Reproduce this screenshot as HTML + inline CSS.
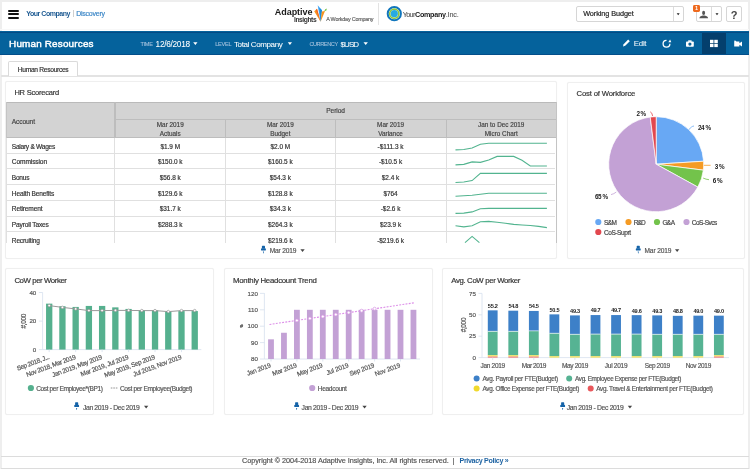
<!DOCTYPE html>
<html><head><meta charset="utf-8"><title>Human Resources</title>
<style>
html,body{margin:0;padding:0;}
body{width:750px;height:469px;position:relative;overflow:hidden;background:#fff;font-family:"Liberation Sans", sans-serif;}
svg text{font-family:"Liberation Sans", sans-serif;}
</style></head><body>
<div style="position:absolute;left:0px;top:0px;width:750px;height:1.6px;background:#eeeeee"></div>
<div style="position:absolute;left:0px;top:0px;width:1.6px;height:469px;background:#eeeeee"></div>
<div style="position:absolute;left:748.4px;top:0px;width:1.6px;height:469px;background:#eeeeee"></div>
<div style="position:absolute;left:8px;top:9.5px;width:11px;height:2px;background:#111;border-radius:1px"></div>
<div style="position:absolute;left:8px;top:13.3px;width:11px;height:2px;background:#111;border-radius:1px"></div>
<div style="position:absolute;left:8px;top:17.1px;width:11px;height:2px;background:#111;border-radius:1px"></div>
<div style="position:absolute;left:73px;top:10px;width:0.8px;height:7px;background:#cfcfcf"></div>
<div style="position:absolute;left:378px;top:3px;width:0.8px;height:22px;background:#e3e3e3"></div>
<div style="position:absolute;left:576.2px;top:6.3px;width:107.4px;height:15.7px;box-sizing:border-box;border:1px solid #d6d6d6;border-radius:2px;background:#fff"></div>
<div style="position:absolute;left:673.2px;top:7px;width:0.8px;height:14.4px;background:#dcdcdc"></div>
<div style="position:absolute;left:696.2px;top:6.2px;width:25.6px;height:15.8px;box-sizing:border-box;border:1px solid #d6d6d6;border-radius:2px;background:#fff"></div>
<div style="position:absolute;left:711.4px;top:6.8px;width:0.8px;height:14.6px;background:#dcdcdc"></div>
<div style="position:absolute;left:693.1px;top:5.0px;width:6.8px;height:6.6px;background:#ee6a1f;border-radius:1.4px"></div>
<div style="position:absolute;left:726.3px;top:6.3px;width:15.5px;height:15.7px;box-sizing:border-box;border:1px solid #d6d6d6;border-radius:2px;background:#fff"></div>
<div style="position:absolute;left:0px;top:28.9px;width:749px;height:1.6px;background:#f8f8f8"></div>
<div style="position:absolute;left:0px;top:31.1px;width:749px;height:24.3px;background:#05629c"></div>
<div style="position:absolute;left:0px;top:31.6px;width:749px;height:1.3px;background:#044a84"></div>
<div style="position:absolute;left:0px;top:54.4px;width:749px;height:1px;background:#034e8a"></div>
<div style="position:absolute;left:702.1px;top:32.5px;width:23.7px;height:21.9px;background:#043f6d"></div>
<div style="position:absolute;left:1px;top:75px;width:748px;height:1.8px;background:#e3e3e3"></div>
<div style="position:absolute;left:8.4px;top:61.1px;width:69.4px;height:15.4px;box-sizing:border-box;border:1.4px solid #dadada;border-bottom:none;border-radius:2px 2px 0 0;background:#fff"></div>
<div style="position:absolute;left:5.3px;top:81.3px;width:551.7px;height:177.3px;box-sizing:border-box;border:1px solid #efefef;border-radius:2px;background:#fff;box-shadow:0 0 1px #f2f2f2"></div>
<div style="position:absolute;left:567px;top:81.5px;width:177.70000000000005px;height:177.10000000000002px;box-sizing:border-box;border:1px solid #efefef;border-radius:2px;background:#fff;box-shadow:0 0 1px #f2f2f2"></div>
<div style="position:absolute;left:5.3px;top:268.4px;width:209.0px;height:146.8px;box-sizing:border-box;border:1px solid #efefef;border-radius:2px;background:#fff;box-shadow:0 0 1px #f2f2f2"></div>
<div style="position:absolute;left:223.6px;top:268.4px;width:209.00000000000003px;height:146.8px;box-sizing:border-box;border:1px solid #efefef;border-radius:2px;background:#fff;box-shadow:0 0 1px #f2f2f2"></div>
<div style="position:absolute;left:442.1px;top:268.4px;width:302.4px;height:146.8px;box-sizing:border-box;border:1px solid #efefef;border-radius:2px;background:#fff;box-shadow:0 0 1px #f2f2f2"></div>
<div style="position:absolute;left:6.1px;top:101.5px;width:550.4px;height:36px;background:#d3d3d3"></div>
<div style="position:absolute;left:6.1px;top:101.6px;width:550.4px;height:1.5px;background:#bababa"></div>
<div style="position:absolute;left:114.9px;top:119.1px;width:441.6px;height:0.9px;background:#bdbdbd"></div>
<div style="position:absolute;left:6.1px;top:137px;width:550.4px;height:1px;background:#bdbdbd"></div>
<div style="position:absolute;left:6.1px;top:101.5px;width:1px;height:36px;background:#c4c4c4"></div>
<div style="position:absolute;left:114.4px;top:101.5px;width:1.2px;height:36px;background:#bdbdbd"></div>
<div style="position:absolute;left:225.1px;top:119.5px;width:1px;height:18px;background:#bdbdbd"></div>
<div style="position:absolute;left:334.6px;top:119.5px;width:1px;height:18px;background:#bdbdbd"></div>
<div style="position:absolute;left:445.5px;top:119.5px;width:1px;height:18px;background:#bdbdbd"></div>
<div style="position:absolute;left:555.5px;top:101.5px;width:1.2px;height:141.2px;background:#c4c4c4"></div>
<div style="position:absolute;left:6.1px;top:152.7px;width:549.4px;height:0.9px;background:#e0e0e0"></div>
<div style="position:absolute;left:6.1px;top:168.39999999999998px;width:549.4px;height:0.9px;background:#e0e0e0"></div>
<div style="position:absolute;left:6.1px;top:184.1px;width:549.4px;height:0.9px;background:#e0e0e0"></div>
<div style="position:absolute;left:6.1px;top:199.79999999999998px;width:549.4px;height:0.9px;background:#e0e0e0"></div>
<div style="position:absolute;left:6.1px;top:215.5px;width:549.4px;height:0.9px;background:#e0e0e0"></div>
<div style="position:absolute;left:6.1px;top:231.2px;width:549.4px;height:0.9px;background:#e0e0e0"></div>
<div style="position:absolute;left:5.6px;top:137.5px;width:0.9px;height:105.2px;background:#e0e0e0"></div>
<div style="position:absolute;left:114.4px;top:137.5px;width:0.9px;height:105.2px;background:#e0e0e0"></div>
<div style="position:absolute;left:225.1px;top:137.5px;width:0.9px;height:105.2px;background:#e0e0e0"></div>
<div style="position:absolute;left:334.6px;top:137.5px;width:0.9px;height:105.2px;background:#e0e0e0"></div>
<div style="position:absolute;left:445.5px;top:137.5px;width:0.9px;height:105.2px;background:#e0e0e0"></div>
<div style="position:absolute;left:6.1px;top:242.7px;width:549px;height:14px;background:#fff"></div>
<div style="position:absolute;left:1px;top:456px;width:748px;height:0.8px;background:#dcdcdc"></div>
<div style="position:absolute;left:1px;top:468px;width:748px;height:1px;background:#dcdcdc"></div>
<svg width="750" height="469" viewBox="0 0 750 469" style="position:absolute;left:0;top:0;will-change:transform">
<path d="M314.2 11.3 L317 8.8 L320.6 21.8 Z" fill="#f7931e"/>
<path d="M316 10 L317 8.8 L320.6 21.8 Z" fill="#f05a28"/>
<path d="M317.7 5.3 L322 10.3 L320.5 21.8 Z" fill="#42a5f5"/>
<path d="M319.5 8 L322 10.3 L320.5 21.8 Z" fill="#1b8fd9"/>
<path d="M321.8 11.6 L325 11 L320.6 21.8 Z" fill="#f7931e"/>
<path d="M324.2 11.3 L325.3 9.2 L326.8 8.4 L326.4 10.6 Z" fill="#6cbf3f"/>
<circle cx="394.3" cy="13.7" r="6.6" fill="none" stroke="#0f75bc" stroke-width="2"/>
<circle cx="394.3" cy="13.7" r="4.6" fill="none" stroke="#8dc63f" stroke-width="1.6"/>
<circle cx="394.3" cy="13.7" r="3.6" fill="#27aae1"/>
<path d="M676.7 13.3 L679.7 13.3 L678.2 15.3 Z" fill="#222"/>
<ellipse cx="703.6" cy="12.9" rx="1.5" ry="2.1" fill="#555"/>
<path d="M699.2 18.3 Q699.5 16 702.6 15.4 L704.6 15.4 Q707.9 16 708.1 18.3 Z" fill="#555"/>
<path d="M715.5 13.3 L718.5 13.3 L717 15.3 Z" fill="#222"/>
<path d="M193.2 42.3 L197.5 42.3 L195.35 45 Z" fill="#fff"/>
<path d="M287.8 42.3 L292 42.3 L289.9 45 Z" fill="#fff"/>
<path d="M363.5 42.3 L367.9 42.3 L365.7 45 Z" fill="#fff"/>
<path d="M623 46.5 L623.6 44.2 L628.2 39.6 L629.8 41.2 L625.2 45.8 Z" fill="#fff"/>
<path d="M666.5 40.4 A3.4 3.4 0 1 0 669.9 43.8" fill="none" stroke="#fff" stroke-width="1.3"/>
<path d="M668.3 42.3 L671.3 42.3 L670.1 39.6 Z" fill="#fff"/>
<rect x="686" y="41.5" width="7.8" height="5.3" rx="0.8" fill="#fff"/><rect x="688.2" y="40.3" width="3.4" height="1.6" fill="#fff"/><circle cx="689.9" cy="44.1" r="1.6" fill="#06619b"/>
<rect x="710" y="39.8" width="3.5" height="3.3" fill="#fff"/><rect x="714.3" y="39.8" width="3.5" height="3.3" fill="#fff"/><rect x="710" y="43.8" width="3.5" height="3.3" fill="#fff"/><rect x="714.3" y="43.8" width="3.5" height="3.3" fill="#fff"/>
<path d="M734.2 41.6 L734.8 40.3 L736.5 41.6 L739.4 41.6 L739.4 46.5 L734.2 46.5 Z M739.4 43.2 L742 41.5 L742 46.5 L739.4 44.8 Z" fill="#fff"/>
<polyline points="455.5,149.9 463.8,149.5 472.1,148.0 480.4,144.3 488.7,143.3 497.1,143.2 505.4,143.2 513.7,143.3 522.0,143.2 530.3,143.2 538.6,143.2 546.9,143.3" fill="none" stroke="#52b48f" stroke-width="1.1"/>
<polyline points="455.5,164.9 463.8,164.4 472.1,161.9 480.4,162.4 488.7,160.0 497.1,156.4 505.4,156.4 513.7,156.4 522.0,160.2 530.3,166.0 538.6,166.0 546.9,166.0" fill="none" stroke="#52b48f" stroke-width="1.1"/>
<polyline points="455.5,182.5 463.8,182.0 472.1,180.6 480.4,173.4 488.7,173.4 497.1,173.4 505.4,173.4 513.7,173.4 522.0,173.4 530.3,173.4 538.6,173.4 546.9,173.4" fill="none" stroke="#52b48f" stroke-width="1.1"/>
<polyline points="455.5,196.3 463.8,195.7 472.1,195.2 480.4,194.2 488.7,193.3 497.1,193.3 505.4,193.3 513.7,193.3 522.0,193.3 530.3,193.3 538.6,193.3 546.9,193.3" fill="none" stroke="#52b48f" stroke-width="1.1"/>
<polyline points="455.5,213.4 463.8,213.1 472.1,211.9 480.4,208.8 488.7,208.4 497.1,208.4 505.4,208.4 513.7,208.4 522.0,208.4 530.3,208.4 538.6,208.4 546.9,208.4" fill="none" stroke="#52b48f" stroke-width="1.1"/>
<polyline points="455.5,225.7 463.8,226.9 472.1,225.7 480.4,221.7 488.7,221.4 497.1,222.2 505.4,223.2 513.7,224.4 522.0,225.0 530.3,225.5 538.6,226.4 546.9,227.6" fill="none" stroke="#52b48f" stroke-width="1.1"/>
<polyline points="465,242.7 472.1,236.4 479.4,242.7" fill="none" stroke="#52b48f" stroke-width="1.1"/>
<rect x="261.90" y="245.80" width="3.1" height="2.8" rx="0.6" fill="#1463a8"/><rect x="261.00" y="248.30" width="4.9" height="2.3" rx="0.9" fill="#1463a8"/><path d="M262.90 251.50 L264.00 251.50 L263.60 253.60 L263.30 253.60 Z" fill="#1463a8"/>
<path d="M300.4 249.2 L304.7 249.2 L302.54999999999995 252.0 Z" fill="#444"/>
<path d="M656.2 164.2 L656.20 116.70 A47.5 47.5 0 0 1 703.61 161.22 Z" fill="#68a8f4" stroke="#fff" stroke-width="0.7"/>
<path d="M656.2 164.2 L703.61 161.22 A47.5 47.5 0 0 1 703.33 170.15 Z" fill="#f59b24" stroke="#fff" stroke-width="0.7"/>
<path d="M656.2 164.2 L703.33 170.15 A47.5 47.5 0 0 1 697.82 187.08 Z" fill="#73c34b" stroke="#fff" stroke-width="0.7"/>
<path d="M656.2 164.2 L697.82 187.08 A47.5 47.5 0 1 1 650.25 117.07 Z" fill="#c3a1d5" stroke="#fff" stroke-width="0.7"/>
<path d="M656.2 164.2 L650.25 117.07 A47.5 47.5 0 0 1 656.20 116.70 Z" fill="#e2474e" stroke="#fff" stroke-width="0.7"/>
<path d="M650.2 111.8 Q652.2 112.5 652.6 116" fill="none" stroke="#e2474e" stroke-width="0.8"/>
<path d="M688.6 129.8 L691.5 127 Q692.5 126.2 694 126" fill="none" stroke="#68a8f4" stroke-width="0.8"/>
<path d="M704 165.3 L710.6 165.3" fill="none" stroke="#f59b24" stroke-width="0.8"/>
<path d="M703.2 178.1 Q706 179.4 709 179.7" fill="none" stroke="#73c34b" stroke-width="0.8"/>
<path d="M611 194.6 Q614 194 616.3 192" fill="none" stroke="#c3a1d5" stroke-width="0.8"/>
<circle cx="598.3" cy="222" r="3.1" fill="#68a8f4"/>
<circle cx="628.5" cy="222" r="3.1" fill="#f59b24"/>
<circle cx="657" cy="222" r="3.1" fill="#73c34b"/>
<circle cx="686.5" cy="222" r="3.1" fill="#c3a1d5"/>
<circle cx="598.3" cy="232" r="3.1" fill="#e2474e"/>
<rect x="636.70" y="245.80" width="3.1" height="2.8" rx="0.6" fill="#1463a8"/><rect x="635.80" y="248.30" width="4.9" height="2.3" rx="0.9" fill="#1463a8"/><path d="M637.70 251.50 L638.80 251.50 L638.40 253.60 L638.10 253.60 Z" fill="#1463a8"/>
<path d="M675 249.2 L679.3 249.2 L677.15 252.0 Z" fill="#444"/>
<line x1="42.6" y1="292.5" x2="42.6" y2="349.6" stroke="#d5e0ee" stroke-width="0.8"/>
<line x1="42.6" y1="349.6" x2="201.3" y2="349.6" stroke="#d5e0ee" stroke-width="0.8"/>
<line x1="38.9" y1="349.6" x2="42.6" y2="349.6" stroke="#d5e0ee" stroke-width="0.8"/>
<line x1="38.9" y1="321.1" x2="42.6" y2="321.1" stroke="#d5e0ee" stroke-width="0.8"/>
<line x1="38.9" y1="292.5" x2="42.6" y2="292.5" stroke="#d5e0ee" stroke-width="0.8"/>
<rect x="46.05" y="303.65" width="6.3" height="45.95" fill="#55b08e"/>
<rect x="59.28" y="306.22" width="6.3" height="43.38" fill="#55b08e"/>
<rect x="72.51" y="306.93" width="6.3" height="42.67" fill="#55b08e"/>
<rect x="85.74" y="305.93" width="6.3" height="43.67" fill="#55b08e"/>
<rect x="98.97" y="305.93" width="6.3" height="43.67" fill="#55b08e"/>
<rect x="112.20" y="307.36" width="6.3" height="42.24" fill="#55b08e"/>
<rect x="125.43" y="308.93" width="6.3" height="40.67" fill="#55b08e"/>
<rect x="138.66" y="310.36" width="6.3" height="39.24" fill="#55b08e"/>
<rect x="151.89" y="310.36" width="6.3" height="39.24" fill="#55b08e"/>
<rect x="165.12" y="311.64" width="6.3" height="37.96" fill="#55b08e"/>
<rect x="178.35" y="311.07" width="6.3" height="38.53" fill="#55b08e"/>
<rect x="191.58" y="311.07" width="6.3" height="38.53" fill="#55b08e"/>
<polyline points="49.2,305.6 62.4,307.4 75.7,308.9 88.9,310.6 102.1,310.6 115.4,310.4 128.6,310.4 141.8,310.6 155.0,310.6 168.3,311.6 181.5,310.6 194.7,310.6" fill="none" stroke="#999" stroke-width="1"/>
<circle cx="49.2" cy="305.6" r="1.3" fill="#fff" stroke="#888" stroke-width="0.6"/>
<circle cx="62.4" cy="307.4" r="1.3" fill="#fff" stroke="#888" stroke-width="0.6"/>
<circle cx="75.7" cy="308.9" r="1.3" fill="#fff" stroke="#888" stroke-width="0.6"/>
<circle cx="88.9" cy="310.6" r="1.3" fill="#fff" stroke="#888" stroke-width="0.6"/>
<circle cx="102.1" cy="310.6" r="1.3" fill="#fff" stroke="#888" stroke-width="0.6"/>
<circle cx="115.4" cy="310.4" r="1.3" fill="#fff" stroke="#888" stroke-width="0.6"/>
<circle cx="128.6" cy="310.4" r="1.3" fill="#fff" stroke="#888" stroke-width="0.6"/>
<circle cx="141.8" cy="310.6" r="1.3" fill="#fff" stroke="#888" stroke-width="0.6"/>
<circle cx="155.0" cy="310.6" r="1.3" fill="#fff" stroke="#888" stroke-width="0.6"/>
<circle cx="168.3" cy="311.6" r="1.3" fill="#fff" stroke="#888" stroke-width="0.6"/>
<circle cx="181.5" cy="310.6" r="1.3" fill="#fff" stroke="#888" stroke-width="0.6"/>
<circle cx="194.7" cy="310.6" r="1.3" fill="#fff" stroke="#888" stroke-width="0.6"/>
<line x1="49.2" y1="349.6" x2="49.2" y2="352.1" stroke="#d5e0ee" stroke-width="0.8"/>
<line x1="75.7" y1="349.6" x2="75.7" y2="352.1" stroke="#d5e0ee" stroke-width="0.8"/>
<line x1="102.1" y1="349.6" x2="102.1" y2="352.1" stroke="#d5e0ee" stroke-width="0.8"/>
<line x1="128.6" y1="349.6" x2="128.6" y2="352.1" stroke="#d5e0ee" stroke-width="0.8"/>
<line x1="155.0" y1="349.6" x2="155.0" y2="352.1" stroke="#d5e0ee" stroke-width="0.8"/>
<line x1="181.5" y1="349.6" x2="181.5" y2="352.1" stroke="#d5e0ee" stroke-width="0.8"/>
<circle cx="30.9" cy="388" r="3.1" fill="#55b08e"/>
<line x1="110.8" y1="388" x2="117.4" y2="388" stroke="#888" stroke-width="0.9" stroke-dasharray="1.6 0.9"/>
<rect x="75.10" y="402.30" width="3.1" height="2.8" rx="0.6" fill="#1463a8"/><rect x="74.20" y="404.80" width="4.9" height="2.3" rx="0.9" fill="#1463a8"/><path d="M76.10 408.00 L77.20 408.00 L76.80 410.10 L76.50 410.10 Z" fill="#1463a8"/>
<path d="M144 405.7 L148.3 405.7 L146.15 408.5 Z" fill="#444"/>
<line x1="264.4" y1="293.2" x2="264.4" y2="359" stroke="#d5e0ee" stroke-width="0.8"/>
<line x1="264.4" y1="359" x2="420" y2="359" stroke="#d5e0ee" stroke-width="0.8"/>
<line x1="260" y1="359.0" x2="264.4" y2="359.0" stroke="#d5e0ee" stroke-width="0.8"/>
<line x1="260" y1="342.6" x2="264.4" y2="342.6" stroke="#d5e0ee" stroke-width="0.8"/>
<line x1="260" y1="326.2" x2="264.4" y2="326.2" stroke="#d5e0ee" stroke-width="0.8"/>
<line x1="260" y1="309.8" x2="264.4" y2="309.8" stroke="#d5e0ee" stroke-width="0.8"/>
<line x1="260" y1="293.4" x2="264.4" y2="293.4" stroke="#d5e0ee" stroke-width="0.8"/>
<rect x="268.10" y="339.32" width="5.8" height="19.68" fill="#c3a1d5"/>
<rect x="281.05" y="332.76" width="5.8" height="26.24" fill="#c3a1d5"/>
<rect x="294.00" y="309.80" width="5.8" height="49.20" fill="#c3a1d5"/>
<rect x="306.95" y="309.80" width="5.8" height="49.20" fill="#c3a1d5"/>
<rect x="319.90" y="309.80" width="5.8" height="49.20" fill="#c3a1d5"/>
<rect x="332.85" y="309.80" width="5.8" height="49.20" fill="#c3a1d5"/>
<rect x="345.80" y="309.80" width="5.8" height="49.20" fill="#c3a1d5"/>
<rect x="358.75" y="309.80" width="5.8" height="49.20" fill="#c3a1d5"/>
<rect x="371.70" y="309.80" width="5.8" height="49.20" fill="#c3a1d5"/>
<rect x="384.65" y="309.80" width="5.8" height="49.20" fill="#c3a1d5"/>
<rect x="397.60" y="309.80" width="5.8" height="49.20" fill="#c3a1d5"/>
<rect x="410.55" y="309.80" width="5.8" height="49.20" fill="#c3a1d5"/>
<line x1="269.5" y1="324.5" x2="414.95" y2="302.7" stroke="#dc8ee8" stroke-width="1.1" stroke-dasharray="1.9 1.3"/>
<circle cx="296.9" cy="320.4" r="1.5" fill="#fff" stroke="#d596e2" stroke-width="0.7"/>
<circle cx="309.9" cy="318.4" r="1.5" fill="#fff" stroke="#d596e2" stroke-width="0.7"/>
<circle cx="322.8" cy="316.5" r="1.5" fill="#fff" stroke="#d596e2" stroke-width="0.7"/>
<circle cx="335.8" cy="314.5" r="1.5" fill="#fff" stroke="#d596e2" stroke-width="0.7"/>
<circle cx="348.7" cy="312.6" r="1.5" fill="#fff" stroke="#d596e2" stroke-width="0.7"/>
<circle cx="361.6" cy="310.7" r="1.5" fill="#fff" stroke="#d596e2" stroke-width="0.7"/>
<circle cx="374.6" cy="308.7" r="1.5" fill="#fff" stroke="#d596e2" stroke-width="0.7"/>
<line x1="271.0" y1="359" x2="271.0" y2="361.5" stroke="#d5e0ee" stroke-width="0.8"/>
<line x1="296.9" y1="359" x2="296.9" y2="361.5" stroke="#d5e0ee" stroke-width="0.8"/>
<line x1="322.8" y1="359" x2="322.8" y2="361.5" stroke="#d5e0ee" stroke-width="0.8"/>
<line x1="348.7" y1="359" x2="348.7" y2="361.5" stroke="#d5e0ee" stroke-width="0.8"/>
<line x1="374.6" y1="359" x2="374.6" y2="361.5" stroke="#d5e0ee" stroke-width="0.8"/>
<line x1="400.5" y1="359" x2="400.5" y2="361.5" stroke="#d5e0ee" stroke-width="0.8"/>
<circle cx="312.2" cy="388" r="3.1" fill="#c3a1d5"/>
<rect x="295.10" y="402.30" width="3.1" height="2.8" rx="0.6" fill="#1463a8"/><rect x="294.20" y="404.80" width="4.9" height="2.3" rx="0.9" fill="#1463a8"/><path d="M296.10 408.00 L297.20 408.00 L296.80 410.10 L296.50 410.10 Z" fill="#1463a8"/>
<path d="M362.4 405.7 L366.7 405.7 L364.54999999999995 408.5 Z" fill="#444"/>
<line x1="482" y1="293.4" x2="482" y2="357.6" stroke="#d5e0ee" stroke-width="0.8"/>
<line x1="482" y1="357.6" x2="729" y2="357.6" stroke="#d5e0ee" stroke-width="0.8"/>
<line x1="478.5" y1="357.6" x2="482" y2="357.6" stroke="#d5e0ee" stroke-width="0.8"/>
<line x1="478.5" y1="336.2" x2="482" y2="336.2" stroke="#d5e0ee" stroke-width="0.8"/>
<line x1="478.5" y1="314.8" x2="482" y2="314.8" stroke="#d5e0ee" stroke-width="0.8"/>
<line x1="478.5" y1="293.4" x2="482" y2="293.4" stroke="#d5e0ee" stroke-width="0.8"/>
<rect x="487.80" y="310.35" width="9.8" height="21.06" fill="#3d80c8"/>
<rect x="487.80" y="331.41" width="9.8" height="23.79" fill="#56b393"/>
<rect x="487.80" y="330.91" width="9.8" height="0.6" fill="#fff"/>
<rect x="487.80" y="355.20" width="9.8" height="1.4" fill="#f0e05c"/>
<rect x="487.80" y="356.60" width="9.8" height="1.0" fill="#ee6f6f"/>
<rect x="508.36" y="310.69" width="9.8" height="20.72" fill="#3d80c8"/>
<rect x="508.36" y="331.41" width="9.8" height="23.79" fill="#56b393"/>
<rect x="508.36" y="330.91" width="9.8" height="0.6" fill="#fff"/>
<rect x="508.36" y="355.20" width="9.8" height="1.4" fill="#f0e05c"/>
<rect x="508.36" y="356.60" width="9.8" height="1.0" fill="#ee6f6f"/>
<rect x="528.92" y="310.95" width="9.8" height="20.12" fill="#3d80c8"/>
<rect x="528.92" y="331.06" width="9.8" height="24.14" fill="#56b393"/>
<rect x="528.92" y="330.56" width="9.8" height="0.6" fill="#fff"/>
<rect x="528.92" y="355.20" width="9.8" height="1.4" fill="#f0e05c"/>
<rect x="528.92" y="356.60" width="9.8" height="1.0" fill="#ee6f6f"/>
<rect x="549.48" y="314.37" width="9.8" height="19.00" fill="#3d80c8"/>
<rect x="549.48" y="333.38" width="9.8" height="22.82" fill="#56b393"/>
<rect x="549.48" y="332.88" width="9.8" height="0.6" fill="#fff"/>
<rect x="549.48" y="356.20" width="9.8" height="1.4" fill="#f0e05c"/>
<rect x="570.04" y="315.40" width="9.8" height="19.00" fill="#3d80c8"/>
<rect x="570.04" y="334.40" width="9.8" height="21.80" fill="#56b393"/>
<rect x="570.04" y="333.90" width="9.8" height="0.6" fill="#fff"/>
<rect x="570.04" y="356.20" width="9.8" height="1.4" fill="#f0e05c"/>
<rect x="590.60" y="315.06" width="9.8" height="19.17" fill="#3d80c8"/>
<rect x="590.60" y="334.23" width="9.8" height="21.97" fill="#56b393"/>
<rect x="590.60" y="333.73" width="9.8" height="0.6" fill="#fff"/>
<rect x="590.60" y="356.20" width="9.8" height="1.4" fill="#f0e05c"/>
<rect x="611.16" y="315.06" width="9.8" height="19.17" fill="#3d80c8"/>
<rect x="611.16" y="334.23" width="9.8" height="21.97" fill="#56b393"/>
<rect x="611.16" y="333.73" width="9.8" height="0.6" fill="#fff"/>
<rect x="611.16" y="356.20" width="9.8" height="1.4" fill="#f0e05c"/>
<rect x="631.72" y="315.14" width="9.8" height="19.09" fill="#3d80c8"/>
<rect x="631.72" y="334.23" width="9.8" height="21.97" fill="#56b393"/>
<rect x="631.72" y="333.73" width="9.8" height="0.6" fill="#fff"/>
<rect x="631.72" y="356.20" width="9.8" height="1.4" fill="#f0e05c"/>
<rect x="652.28" y="315.40" width="9.8" height="19.00" fill="#3d80c8"/>
<rect x="652.28" y="334.40" width="9.8" height="21.80" fill="#56b393"/>
<rect x="652.28" y="333.90" width="9.8" height="0.6" fill="#fff"/>
<rect x="652.28" y="356.20" width="9.8" height="1.4" fill="#f0e05c"/>
<rect x="672.84" y="315.83" width="9.8" height="18.58" fill="#3d80c8"/>
<rect x="672.84" y="334.40" width="9.8" height="21.80" fill="#56b393"/>
<rect x="672.84" y="333.90" width="9.8" height="0.6" fill="#fff"/>
<rect x="672.84" y="356.20" width="9.8" height="1.4" fill="#f0e05c"/>
<rect x="693.40" y="315.66" width="9.8" height="18.75" fill="#3d80c8"/>
<rect x="693.40" y="334.40" width="9.8" height="21.80" fill="#56b393"/>
<rect x="693.40" y="333.90" width="9.8" height="0.6" fill="#fff"/>
<rect x="693.40" y="356.20" width="9.8" height="1.4" fill="#f0e05c"/>
<rect x="713.96" y="315.66" width="9.8" height="18.75" fill="#3d80c8"/>
<rect x="713.96" y="334.40" width="9.8" height="20.80" fill="#56b393"/>
<rect x="713.96" y="333.90" width="9.8" height="0.6" fill="#fff"/>
<rect x="713.96" y="355.20" width="9.8" height="1.4" fill="#f0e05c"/>
<rect x="713.96" y="356.60" width="9.8" height="1.0" fill="#ee6f6f"/>
<line x1="492.7" y1="357.6" x2="492.7" y2="360.1" stroke="#d5e0ee" stroke-width="0.8"/>
<line x1="533.8" y1="357.6" x2="533.8" y2="360.1" stroke="#d5e0ee" stroke-width="0.8"/>
<line x1="574.9" y1="357.6" x2="574.9" y2="360.1" stroke="#d5e0ee" stroke-width="0.8"/>
<line x1="616.1" y1="357.6" x2="616.1" y2="360.1" stroke="#d5e0ee" stroke-width="0.8"/>
<line x1="657.2" y1="357.6" x2="657.2" y2="360.1" stroke="#d5e0ee" stroke-width="0.8"/>
<line x1="698.3" y1="357.6" x2="698.3" y2="360.1" stroke="#d5e0ee" stroke-width="0.8"/>
<circle cx="476.6" cy="378.6" r="3.0" fill="#3d80c8"/>
<circle cx="569.2" cy="378.6" r="3.0" fill="#56b393"/>
<circle cx="476.6" cy="388.6" r="3.0" fill="#f0d92c"/>
<circle cx="590.7" cy="388.6" r="3.0" fill="#e9575b"/>
<rect x="561.10" y="402.30" width="3.1" height="2.8" rx="0.6" fill="#1463a8"/><rect x="560.20" y="404.80" width="4.9" height="2.3" rx="0.9" fill="#1463a8"/><path d="M562.10 408.00 L563.20 408.00 L562.80 410.10 L562.50 410.10 Z" fill="#1463a8"/>
<path d="M627.8 405.7 L632.0999999999999 405.7 L629.9499999999999 408.5 Z" fill="#444"/>
<text x="26.20" y="16.00" font-size="7.0" fill="#1d5a92" font-weight="bold" text-anchor="start" style="letter-spacing:-0.455px;">Your Company</text>
<text x="76.20" y="16.00" font-size="7.0" fill="#3b86c6" font-weight="normal" text-anchor="start" style="letter-spacing:-0.237px;" stroke="#3b86c6" stroke-width="0.18">Discovery</text>
<text x="274.80" y="15.20" font-size="9.0" fill="#1a1a1a" font-weight="bold" text-anchor="start" style="letter-spacing:-0.052px;">Adaptive</text>
<text x="294.00" y="21.60" font-size="6.7" fill="#333" font-weight="bold" text-anchor="start" style="letter-spacing:-0.430px;">Insights</text>
<text x="326.20" y="21.20" font-size="5.4" fill="#666" font-weight="normal" text-anchor="start" style="letter-spacing:-0.197px;" stroke="#666" stroke-width="0.18">A Workday Company</text>
<text x="402.70" y="16.70" font-size="7.2" fill="#555" font-weight="normal" text-anchor="start" style="letter-spacing:-0.633px;" stroke="#555" stroke-width="0.1">Your</text>
<text x="415.00" y="16.70" font-size="7.2" fill="#1a1a1a" font-weight="bold" text-anchor="start" style="letter-spacing:-0.293px;">Company</text>
<text x="445.70" y="16.70" font-size="7.2" fill="#555" font-weight="normal" text-anchor="start" style="letter-spacing:-0.119px;" stroke="#555" stroke-width="0.1">.Inc.</text>
<text x="583.20" y="16.00" font-size="7.3" fill="#222" font-weight="normal" text-anchor="start" style="letter-spacing:-0.085px;" stroke="#222" stroke-width="0.18">Working Budget</text>
<text x="696.50" y="10.40" font-size="5.6" fill="#fff" font-weight="bold" text-anchor="middle">1</text>
<text x="734.00" y="18.90" font-size="11" fill="#444" font-weight="bold" text-anchor="middle">?</text>
<text x="9.10" y="47.40" font-size="9.9" fill="#fff" font-weight="normal" text-anchor="start" style="letter-spacing:0.188px;" stroke="#fff" stroke-width="0.45">Human Resources</text>
<text x="140.40" y="46.20" font-size="5.6" fill="#a6c3de" font-weight="normal" text-anchor="start" style="letter-spacing:-0.294px;" stroke="#a6c3de" stroke-width="0.08">TIME</text>
<text x="155.60" y="46.70" font-size="8.3" fill="#fff" font-weight="normal" text-anchor="start" style="letter-spacing:-0.302px;" stroke="#fff" stroke-width="0.05">12/6/2018</text>
<text x="215.30" y="46.20" font-size="5.6" fill="#a6c3de" font-weight="normal" text-anchor="start" style="letter-spacing:-0.284px;" stroke="#a6c3de" stroke-width="0.08">LEVEL</text>
<text x="234.00" y="46.60" font-size="8.0" fill="#fff" font-weight="normal" text-anchor="start" style="letter-spacing:-0.389px;" stroke="#fff" stroke-width="0.05">Total Company</text>
<text x="309.40" y="46.20" font-size="5.6" fill="#a6c3de" font-weight="normal" text-anchor="start" style="letter-spacing:-0.425px;" stroke="#a6c3de" stroke-width="0.08">CURRENCY</text>
<text x="340.60" y="46.60" font-size="8.0" fill="#fff" font-weight="normal" text-anchor="start" style="letter-spacing:-0.961px;" stroke="#fff" stroke-width="0.05">$USD</text>
<text x="633.80" y="46.00" font-size="7.9" fill="#f2f6fa" font-weight="normal" text-anchor="start" style="letter-spacing:-0.277px;" stroke="#f2f6fa" stroke-width="0.05">Edit</text>
<text x="17.80" y="71.80" font-size="6.7" fill="#333" font-weight="normal" text-anchor="start" style="letter-spacing:-0.319px;" stroke="#333" stroke-width="0.18">Human Resources</text>
<text x="14.40" y="95.20" font-size="7.5" fill="#333" font-weight="normal" text-anchor="start" style="letter-spacing:-0.209px;" stroke="#333" stroke-width="0.18">HR Scorecard</text>
<text x="11.80" y="123.80" font-size="6.7" fill="#444" font-weight="normal" text-anchor="start" style="letter-spacing:-0.153px;" stroke="#444" stroke-width="0.18">Account</text>
<text x="326.30" y="113.20" font-size="6.6" fill="#444" font-weight="normal" text-anchor="start" style="letter-spacing:-0.094px;" stroke="#444" stroke-width="0.18">Period</text>
<text x="170.25" y="127.10" font-size="6.37" fill="#444" font-weight="normal" text-anchor="middle" stroke="#444" stroke-width="0.18">Mar 2019</text>
<text x="170.25" y="135.50" font-size="6.37" fill="#444" font-weight="normal" text-anchor="middle" stroke="#444" stroke-width="0.18">Actuals</text>
<text x="280.35" y="127.10" font-size="6.37" fill="#444" font-weight="normal" text-anchor="middle" stroke="#444" stroke-width="0.18">Mar 2019</text>
<text x="280.35" y="135.50" font-size="6.37" fill="#444" font-weight="normal" text-anchor="middle" stroke="#444" stroke-width="0.18">Budget</text>
<text x="390.55" y="127.10" font-size="6.37" fill="#444" font-weight="normal" text-anchor="middle" stroke="#444" stroke-width="0.18">Mar 2019</text>
<text x="390.55" y="135.50" font-size="6.37" fill="#444" font-weight="normal" text-anchor="middle" stroke="#444" stroke-width="0.18">Variance</text>
<text x="501.25" y="127.10" font-size="6.37" fill="#444" font-weight="normal" text-anchor="middle" stroke="#444" stroke-width="0.18">Jan to Dec 2019</text>
<text x="501.25" y="135.50" font-size="6.37" fill="#444" font-weight="normal" text-anchor="middle" stroke="#444" stroke-width="0.18">Micro Chart</text>
<text x="11.80" y="148.60" font-size="6.6" fill="#333" font-weight="normal" text-anchor="start" style="letter-spacing:-0.274px;" stroke="#333" stroke-width="0.18">Salary & Wages</text>
<text x="170.25" y="148.60" font-size="6.44" fill="#333" font-weight="normal" text-anchor="middle" stroke="#333" stroke-width="0.18">$1.9 M</text>
<text x="280.35" y="148.60" font-size="6.44" fill="#333" font-weight="normal" text-anchor="middle" stroke="#333" stroke-width="0.18">$2.0 M</text>
<text x="390.55" y="148.60" font-size="6.44" fill="#333" font-weight="normal" text-anchor="middle" stroke="#333" stroke-width="0.18">-$111.3 k</text>
<text x="11.80" y="164.30" font-size="6.6" fill="#333" font-weight="normal" text-anchor="start" style="letter-spacing:-0.108px;" stroke="#333" stroke-width="0.18">Commission</text>
<text x="170.25" y="164.30" font-size="6.44" fill="#333" font-weight="normal" text-anchor="middle" stroke="#333" stroke-width="0.18">$150.0 k</text>
<text x="280.35" y="164.30" font-size="6.44" fill="#333" font-weight="normal" text-anchor="middle" stroke="#333" stroke-width="0.18">$160.5 k</text>
<text x="390.55" y="164.30" font-size="6.44" fill="#333" font-weight="normal" text-anchor="middle" stroke="#333" stroke-width="0.18">-$10.5 k</text>
<text x="11.80" y="180.00" font-size="6.6" fill="#333" font-weight="normal" text-anchor="start" style="letter-spacing:-0.261px;" stroke="#333" stroke-width="0.18">Bonus</text>
<text x="170.25" y="180.00" font-size="6.44" fill="#333" font-weight="normal" text-anchor="middle" stroke="#333" stroke-width="0.18">$56.8 k</text>
<text x="280.35" y="180.00" font-size="6.44" fill="#333" font-weight="normal" text-anchor="middle" stroke="#333" stroke-width="0.18">$54.3 k</text>
<text x="390.55" y="180.00" font-size="6.44" fill="#333" font-weight="normal" text-anchor="middle" stroke="#333" stroke-width="0.18">$2.4 k</text>
<text x="11.80" y="195.70" font-size="6.6" fill="#333" font-weight="normal" text-anchor="start" style="letter-spacing:-0.161px;" stroke="#333" stroke-width="0.18">Health Benefits</text>
<text x="170.25" y="195.70" font-size="6.44" fill="#333" font-weight="normal" text-anchor="middle" stroke="#333" stroke-width="0.18">$129.6 k</text>
<text x="280.35" y="195.70" font-size="6.44" fill="#333" font-weight="normal" text-anchor="middle" stroke="#333" stroke-width="0.18">$128.8 k</text>
<text x="390.55" y="195.70" font-size="6.44" fill="#333" font-weight="normal" text-anchor="middle" stroke="#333" stroke-width="0.18">$764</text>
<text x="11.80" y="211.40" font-size="6.6" fill="#333" font-weight="normal" text-anchor="start" style="letter-spacing:-0.175px;" stroke="#333" stroke-width="0.18">Retirement</text>
<text x="170.25" y="211.40" font-size="6.44" fill="#333" font-weight="normal" text-anchor="middle" stroke="#333" stroke-width="0.18">$31.7 k</text>
<text x="280.35" y="211.40" font-size="6.44" fill="#333" font-weight="normal" text-anchor="middle" stroke="#333" stroke-width="0.18">$34.3 k</text>
<text x="390.55" y="211.40" font-size="6.44" fill="#333" font-weight="normal" text-anchor="middle" stroke="#333" stroke-width="0.18">-$2.6 k</text>
<text x="11.80" y="227.10" font-size="6.6" fill="#333" font-weight="normal" text-anchor="start" style="letter-spacing:-0.169px;" stroke="#333" stroke-width="0.18">Payroll Taxes</text>
<text x="170.25" y="227.10" font-size="6.44" fill="#333" font-weight="normal" text-anchor="middle" stroke="#333" stroke-width="0.18">$288.3 k</text>
<text x="280.35" y="227.10" font-size="6.44" fill="#333" font-weight="normal" text-anchor="middle" stroke="#333" stroke-width="0.18">$264.3 k</text>
<text x="390.55" y="227.10" font-size="6.44" fill="#333" font-weight="normal" text-anchor="middle" stroke="#333" stroke-width="0.18">$23.9 k</text>
<text x="11.80" y="242.80" font-size="6.6" fill="#333" font-weight="normal" text-anchor="start" style="letter-spacing:-0.179px;" stroke="#333" stroke-width="0.18">Recruiting</text>
<text x="280.35" y="242.80" font-size="6.44" fill="#333" font-weight="normal" text-anchor="middle" stroke="#333" stroke-width="0.18">$219.6 k</text>
<text x="390.55" y="242.80" font-size="6.44" fill="#333" font-weight="normal" text-anchor="middle" stroke="#333" stroke-width="0.18">-$219.6 k</text>
<text x="269.80" y="253.40" font-size="6.6" fill="#555" font-weight="normal" text-anchor="start" style="letter-spacing:-0.182px;" stroke="#555" stroke-width="0.18">Mar 2019</text>
<text x="576.50" y="95.50" font-size="7.7" fill="#333" font-weight="normal" text-anchor="start" style="letter-spacing:-0.158px;" stroke="#333" stroke-width="0.18">Cost of Workforce</text>
<text x="636.60" y="115.90" font-size="6.3" fill="#222" font-weight="bold" text-anchor="start" style="letter-spacing:-0.620px;">2 %</text>
<text x="698.00" y="129.90" font-size="6.3" fill="#222" font-weight="bold" text-anchor="start" style="letter-spacing:-0.390px;">24 %</text>
<text x="714.80" y="168.90" font-size="6.3" fill="#222" font-weight="bold" text-anchor="start" style="letter-spacing:-0.553px;">3 %</text>
<text x="712.70" y="182.90" font-size="6.3" fill="#222" font-weight="bold" text-anchor="start" style="letter-spacing:-0.520px;">6 %</text>
<text x="595.00" y="198.80" font-size="6.3" fill="#222" font-weight="bold" text-anchor="start" style="letter-spacing:-0.440px;">65 %</text>
<text x="603.90" y="224.50" font-size="6.5" fill="#444" font-weight="normal" text-anchor="start" style="letter-spacing:-0.565px;" stroke="#444" stroke-width="0.18">S&amp;M</text>
<text x="633.70" y="224.50" font-size="6.5" fill="#444" font-weight="normal" text-anchor="start" style="letter-spacing:-0.811px;" stroke="#444" stroke-width="0.18">R&amp;D</text>
<text x="662.40" y="224.50" font-size="6.5" fill="#444" font-weight="normal" text-anchor="start" style="letter-spacing:-0.578px;" stroke="#444" stroke-width="0.18">G&amp;A</text>
<text x="691.70" y="224.50" font-size="6.5" fill="#444" font-weight="normal" text-anchor="start" style="letter-spacing:-0.463px;" stroke="#444" stroke-width="0.18">CoS-Svcs</text>
<text x="603.90" y="234.50" font-size="6.5" fill="#444" font-weight="normal" text-anchor="start" style="letter-spacing:-0.395px;" stroke="#444" stroke-width="0.18">CoS-Suprt</text>
<text x="644.50" y="253.40" font-size="6.6" fill="#555" font-weight="normal" text-anchor="start" style="letter-spacing:-0.120px;" stroke="#555" stroke-width="0.18">Mar 2019</text>
<text x="14.40" y="282.90" font-size="7.8" fill="#333" font-weight="normal" text-anchor="start" style="letter-spacing:-0.416px;" stroke="#333" stroke-width="0.18">CoW per Worker</text>
<text x="36.30" y="351.80" font-size="6.2" fill="#555" font-weight="normal" text-anchor="end" stroke="#555" stroke-width="0.18">0</text>
<text x="36.30" y="323.26" font-size="6.2" fill="#555" font-weight="normal" text-anchor="end" stroke="#555" stroke-width="0.18">20</text>
<text x="36.30" y="294.72" font-size="6.2" fill="#555" font-weight="normal" text-anchor="end" stroke="#555" stroke-width="0.18">40</text>
<text x="26.00" y="321.20" font-size="6.5" fill="#555" font-weight="normal" text-anchor="middle" transform="rotate(-90 26 321.2)" style="letter-spacing:-0.356px;" stroke="#555" stroke-width="0.18">#,000</text>
<text x="49.50" y="358.80" font-size="6.5" fill="#555" font-weight="normal" text-anchor="end" transform="rotate(-20.5 49.5 358.8)" style="letter-spacing:-0.438px;" stroke="#555" stroke-width="0.18">Sep 2018, J...</text>
<text x="75.96" y="358.80" font-size="6.5" fill="#555" font-weight="normal" text-anchor="end" transform="rotate(-20.5 75.96 358.8)" style="letter-spacing:-0.384px;" stroke="#555" stroke-width="0.18">Nov 2018, Mar 2019</text>
<text x="102.42" y="358.80" font-size="6.5" fill="#555" font-weight="normal" text-anchor="end" transform="rotate(-20.5 102.42 358.8)" style="letter-spacing:-0.345px;" stroke="#555" stroke-width="0.18">Jan 2019, May 2019</text>
<text x="128.88" y="358.80" font-size="6.5" fill="#555" font-weight="normal" text-anchor="end" transform="rotate(-20.5 128.88 358.8)" style="letter-spacing:-0.286px;" stroke="#555" stroke-width="0.18">Mar 2019, Jul 2019</text>
<text x="155.34" y="358.80" font-size="6.5" fill="#555" font-weight="normal" text-anchor="end" transform="rotate(-20.5 155.34000000000003 358.8)" style="letter-spacing:-0.361px;" stroke="#555" stroke-width="0.18">May 2019, Sep 2019</text>
<text x="181.80" y="358.80" font-size="6.5" fill="#555" font-weight="normal" text-anchor="end" transform="rotate(-20.5 181.8 358.8)" style="letter-spacing:-0.284px;" stroke="#555" stroke-width="0.18">Jul 2019, Nov 2019</text>
<text x="36.20" y="390.60" font-size="6.6" fill="#555" font-weight="normal" text-anchor="start" style="letter-spacing:-0.396px;" stroke="#555" stroke-width="0.18">Cost per Employee*(BP1)</text>
<text x="119.90" y="390.60" font-size="6.6" fill="#555" font-weight="normal" text-anchor="start" style="letter-spacing:-0.363px;" stroke="#555" stroke-width="0.18">Cost per Employee(Budget)</text>
<text x="82.90" y="409.90" font-size="6.8" fill="#555" font-weight="normal" text-anchor="start" style="letter-spacing:-0.343px;" stroke="#555" stroke-width="0.18">Jan 2019 - Dec 2019</text>
<text x="233.00" y="282.90" font-size="7.8" fill="#333" font-weight="normal" text-anchor="start" style="letter-spacing:-0.248px;" stroke="#333" stroke-width="0.18">Monthly Headcount Trend</text>
<text x="257.90" y="361.20" font-size="6.2" fill="#555" font-weight="normal" text-anchor="end" stroke="#555" stroke-width="0.18">80</text>
<text x="257.90" y="344.80" font-size="6.2" fill="#555" font-weight="normal" text-anchor="end" stroke="#555" stroke-width="0.18">90</text>
<text x="257.90" y="328.40" font-size="6.2" fill="#555" font-weight="normal" text-anchor="end" stroke="#555" stroke-width="0.18">100</text>
<text x="257.90" y="312.00" font-size="6.2" fill="#555" font-weight="normal" text-anchor="end" stroke="#555" stroke-width="0.18">110</text>
<text x="257.90" y="295.60" font-size="6.2" fill="#555" font-weight="normal" text-anchor="end" stroke="#555" stroke-width="0.18">120</text>
<text x="241.60" y="328.20" font-size="5.5" fill="#555" font-weight="normal" text-anchor="middle" stroke="#555" stroke-width="0.18">#</text>
<text x="271.20" y="367.00" font-size="6.5" fill="#555" font-weight="normal" text-anchor="end" transform="rotate(-20.5 271.2 367.0)" style="letter-spacing:-0.206px;" stroke="#555" stroke-width="0.18">Jan 2019</text>
<text x="297.10" y="367.00" font-size="6.5" fill="#555" font-weight="normal" text-anchor="end" transform="rotate(-20.5 297.09999999999997 367.0)" style="letter-spacing:-0.259px;" stroke="#555" stroke-width="0.18">Mar 2019</text>
<text x="323.00" y="367.00" font-size="6.5" fill="#555" font-weight="normal" text-anchor="end" transform="rotate(-20.5 323.0 367.0)" style="letter-spacing:-0.218px;" stroke="#555" stroke-width="0.18">May 2019</text>
<text x="348.90" y="367.00" font-size="6.5" fill="#555" font-weight="normal" text-anchor="end" transform="rotate(-20.5 348.9 367.0)" style="letter-spacing:-0.172px;" stroke="#555" stroke-width="0.18">Jul 2019</text>
<text x="374.80" y="367.00" font-size="6.5" fill="#555" font-weight="normal" text-anchor="end" transform="rotate(-20.5 374.8 367.0)" style="letter-spacing:-0.230px;" stroke="#555" stroke-width="0.18">Sep 2019</text>
<text x="400.70" y="367.00" font-size="6.5" fill="#555" font-weight="normal" text-anchor="end" transform="rotate(-20.5 400.7 367.0)" style="letter-spacing:-0.154px;" stroke="#555" stroke-width="0.18">Nov 2019</text>
<text x="317.80" y="390.60" font-size="6.6" fill="#555" font-weight="normal" text-anchor="start" style="letter-spacing:-0.345px;" stroke="#555" stroke-width="0.18">Headcount</text>
<text x="301.60" y="409.90" font-size="6.8" fill="#555" font-weight="normal" text-anchor="start" style="letter-spacing:-0.343px;" stroke="#555" stroke-width="0.18">Jan 2019 - Dec 2019</text>
<text x="451.30" y="282.90" font-size="7.8" fill="#333" font-weight="normal" text-anchor="start" style="letter-spacing:-0.360px;" stroke="#333" stroke-width="0.18">Avg. CoW per Worker</text>
<text x="475.90" y="359.80" font-size="6.2" fill="#555" font-weight="normal" text-anchor="end" stroke="#555" stroke-width="0.18">0</text>
<text x="475.90" y="338.40" font-size="6.2" fill="#555" font-weight="normal" text-anchor="end" stroke="#555" stroke-width="0.18">25</text>
<text x="475.90" y="317.00" font-size="6.2" fill="#555" font-weight="normal" text-anchor="end" stroke="#555" stroke-width="0.18">50</text>
<text x="475.90" y="295.60" font-size="6.2" fill="#555" font-weight="normal" text-anchor="end" stroke="#555" stroke-width="0.18">75</text>
<text x="466.00" y="325.10" font-size="6.5" fill="#555" font-weight="normal" text-anchor="middle" transform="rotate(-90 466 325.1)" style="letter-spacing:-0.356px;" stroke="#555" stroke-width="0.18">#,000</text>
<text x="492.70" y="307.75" font-size="5.6" fill="#222" font-weight="bold" text-anchor="middle" style="letter-spacing:-0.298px;">55.2</text>
<text x="513.26" y="308.09" font-size="5.6" fill="#222" font-weight="bold" text-anchor="middle" style="letter-spacing:-0.298px;">54.8</text>
<text x="533.82" y="308.35" font-size="5.6" fill="#222" font-weight="bold" text-anchor="middle" style="letter-spacing:-0.298px;">54.5</text>
<text x="554.38" y="311.77" font-size="5.6" fill="#222" font-weight="bold" text-anchor="middle" style="letter-spacing:-0.298px;">50.5</text>
<text x="574.94" y="312.80" font-size="5.6" fill="#222" font-weight="bold" text-anchor="middle" style="letter-spacing:-0.298px;">49.3</text>
<text x="595.50" y="312.46" font-size="5.6" fill="#222" font-weight="bold" text-anchor="middle" style="letter-spacing:-0.298px;">49.7</text>
<text x="616.06" y="312.46" font-size="5.6" fill="#222" font-weight="bold" text-anchor="middle" style="letter-spacing:-0.298px;">49.7</text>
<text x="636.62" y="312.54" font-size="5.6" fill="#222" font-weight="bold" text-anchor="middle" style="letter-spacing:-0.298px;">49.6</text>
<text x="657.18" y="312.80" font-size="5.6" fill="#222" font-weight="bold" text-anchor="middle" style="letter-spacing:-0.298px;">49.3</text>
<text x="677.74" y="313.23" font-size="5.6" fill="#222" font-weight="bold" text-anchor="middle" style="letter-spacing:-0.298px;">48.8</text>
<text x="698.30" y="313.06" font-size="5.6" fill="#222" font-weight="bold" text-anchor="middle" style="letter-spacing:-0.298px;">49.0</text>
<text x="718.86" y="313.06" font-size="5.6" fill="#222" font-weight="bold" text-anchor="middle" style="letter-spacing:-0.298px;">49.0</text>
<text x="492.70" y="367.90" font-size="6.5" fill="#555" font-weight="normal" text-anchor="middle" style="letter-spacing:-0.306px;" stroke="#555" stroke-width="0.18">Jan 2019</text>
<text x="533.82" y="367.90" font-size="6.5" fill="#555" font-weight="normal" text-anchor="middle" style="letter-spacing:-0.396px;" stroke="#555" stroke-width="0.18">Mar 2019</text>
<text x="574.94" y="367.90" font-size="6.5" fill="#555" font-weight="normal" text-anchor="middle" style="letter-spacing:-0.318px;" stroke="#555" stroke-width="0.18">May 2019</text>
<text x="616.06" y="367.90" font-size="6.5" fill="#555" font-weight="normal" text-anchor="middle" style="letter-spacing:-0.260px;" stroke="#555" stroke-width="0.18">Jul 2019</text>
<text x="657.18" y="367.90" font-size="6.5" fill="#555" font-weight="normal" text-anchor="middle" style="letter-spacing:-0.355px;" stroke="#555" stroke-width="0.18">Sep 2019</text>
<text x="698.30" y="367.90" font-size="6.5" fill="#555" font-weight="normal" text-anchor="middle" style="letter-spacing:-0.316px;" stroke="#555" stroke-width="0.18">Nov 2019</text>
<text x="482.50" y="381.00" font-size="6.4" fill="#555" font-weight="normal" text-anchor="start" style="letter-spacing:-0.284px;" stroke="#555" stroke-width="0.18">Avg. Payroll per FTE(Budget)</text>
<text x="575.00" y="381.00" font-size="6.4" fill="#555" font-weight="normal" text-anchor="start" style="letter-spacing:-0.348px;" stroke="#555" stroke-width="0.18">Avg. Employee Expense per FTE(Budget)</text>
<text x="482.50" y="391.00" font-size="6.4" fill="#555" font-weight="normal" text-anchor="start" style="letter-spacing:-0.298px;" stroke="#555" stroke-width="0.18">Avg. Office Expense per FTE(Budget)</text>
<text x="596.20" y="391.00" font-size="6.4" fill="#555" font-weight="normal" text-anchor="start" style="letter-spacing:-0.291px;" stroke="#555" stroke-width="0.18">Avg. Travel &amp; Entertainment per FTE(Budget)</text>
<text x="566.80" y="409.90" font-size="6.8" fill="#555" font-weight="normal" text-anchor="start" style="letter-spacing:-0.343px;" stroke="#555" stroke-width="0.18">Jan 2019 - Dec 2019</text>
<text x="242.00" y="462.80" font-size="7.3" fill="#555" font-weight="normal" text-anchor="start" style="letter-spacing:-0.059px;" stroke="#555" stroke-width="0.18">Copyright © 2004-2018 Adaptive Insights, Inc. All rights reserved.</text>
<text x="452.40" y="462.80" font-size="7.3" fill="#555" font-weight="normal" text-anchor="start" stroke="#555" stroke-width="0.18">|</text>
<text x="459.50" y="462.80" font-size="7.1" fill="#1f64a3" font-weight="bold" text-anchor="start" style="letter-spacing:-0.327px;">Privacy Policy »</text>
</svg>
</body></html>
